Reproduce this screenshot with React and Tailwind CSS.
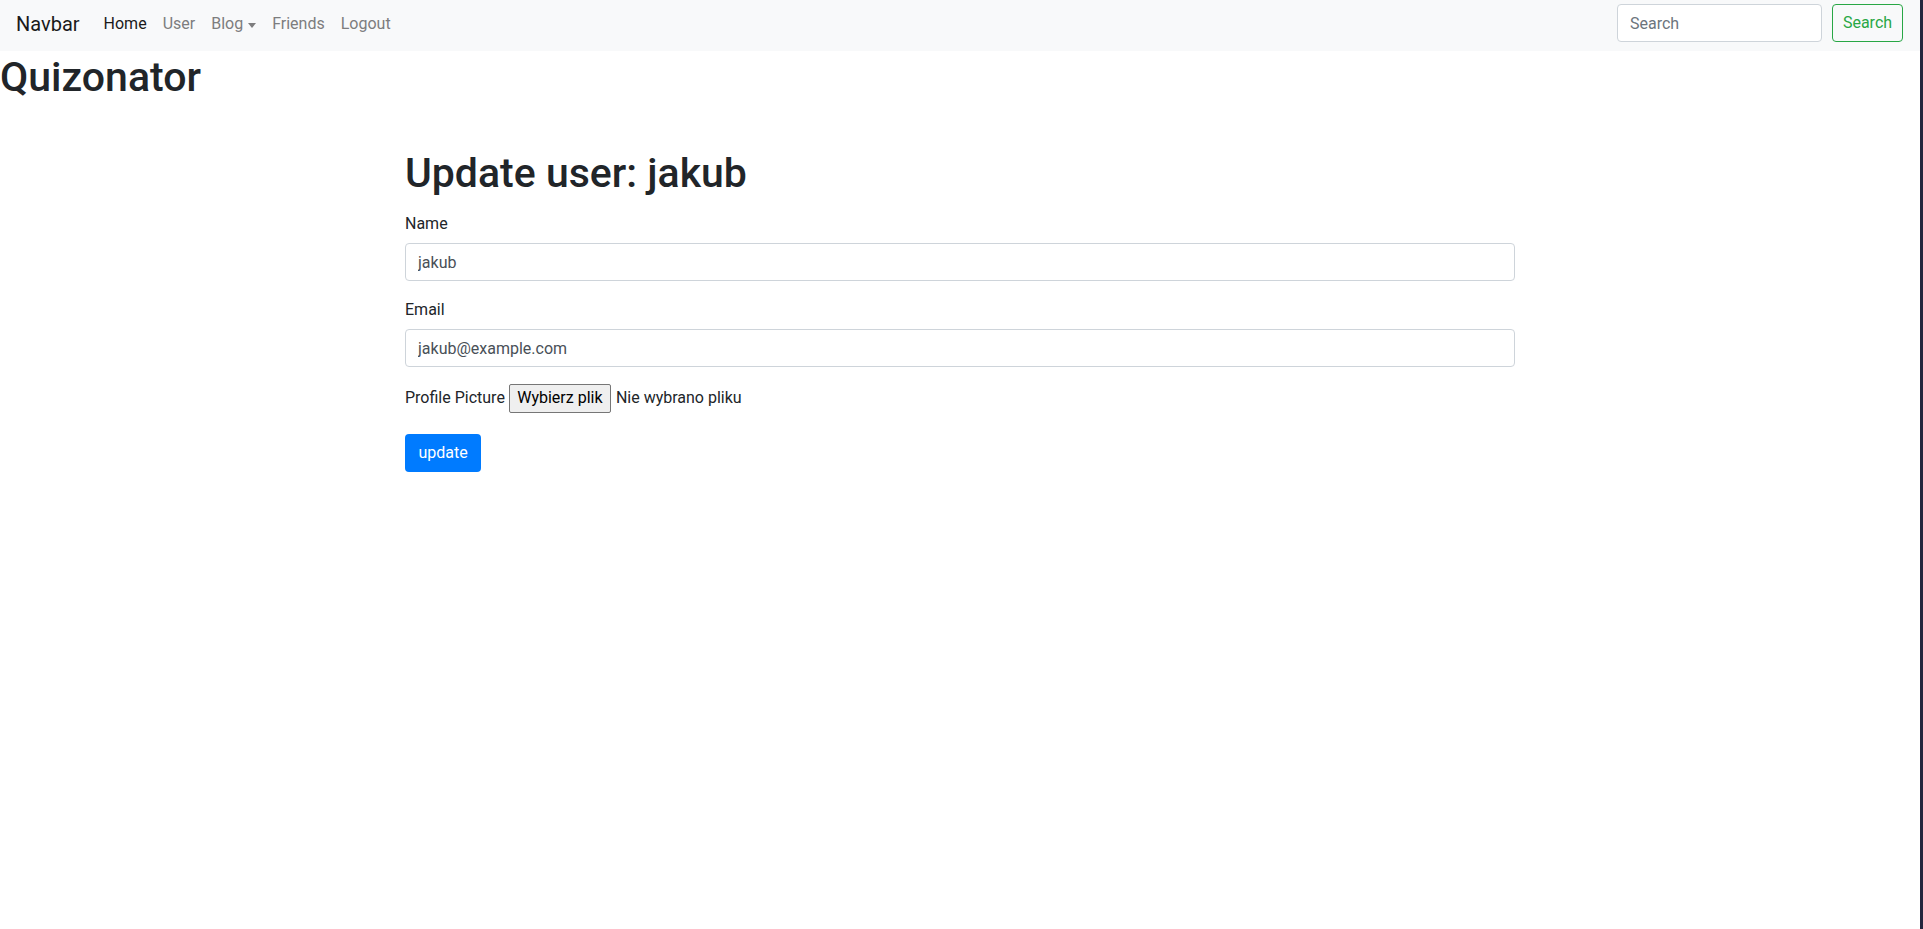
export default function App() {
  return (
    <div className="flex w-[1923px] min-h-[929px] bg-white" style={{ fontFamily: 'Roboto, "Liberation Sans", sans-serif' }}>
      <div className="w-[1920px] text-[#212529]">
        {/* Navbar */}
        <nav className="h-[51px] bg-[#f8f9fa] pt-1">
          <div className="flex h-[38px] items-center pl-4 pr-[17px]">
            <a className="mr-4 mt-[2px] text-[20px] leading-[30px] text-[#1a1a1a]">Navbar</a>
            <ul className="mt-[2px] flex items-center text-[16px] leading-6">
              <li className="px-2 text-[#1a1a1a]">Home</li>
              <li className="px-2 text-[#7d7d7e]">User</li>
              <li className="flex items-center px-2 text-[#7d7d7e]">
                Blog
                <span className="ml-[5px] mt-[2px] h-0 w-0 border-x-[4.5px] border-t-[5px] border-x-transparent border-t-[#7d7d7e]" />
              </li>
              <li className="px-2 text-[#7d7d7e]">Friends</li>
              <li className="px-2 text-[#7d7d7e]">Logout</li>
            </ul>
            <div className="ml-auto flex items-center">
              <input
                type="text"
                placeholder="Search"
                className="h-[38px] w-[205px] rounded border border-[#ced4da] bg-white px-3 text-[16px] text-[#495057] outline-none placeholder:text-[#6c757d]"
              />
              <button className="ml-[10px] h-[38px] w-[71px] rounded border border-[#28a745] text-[16px] text-[#28a745]">
                Search
              </button>
            </div>
          </div>
        </nav>

        {/* Brand heading */}
        <h1 className="mt-[4px] text-[41px] font-medium leading-[44px]">Quizonator</h1>

        {/* Form container */}
        <div className="mx-auto w-[1110px] pt-[52px]">
          <h1 className="text-[41px] font-medium leading-[44px]">Update user: jakub</h1>
          <form className="mt-[16px]">
            <div className="mb-4">
              <label className="mb-[7px] block pt-[1px] text-[16px] leading-6">Name</label>
              <input
                type="text"
                defaultValue="jakub"
                className="block h-[38px] w-full rounded border border-[#ced4da] px-3 text-[16px] text-[#495057] outline-none"
              />
            </div>
            <div className="mb-4">
              <label className="mb-[7px] block pt-[1px] text-[16px] leading-6">Email</label>
              <input
                type="email"
                defaultValue="jakub@example.com"
                className="block h-[38px] w-full rounded border border-[#ced4da] px-3 text-[16px] text-[#495057] outline-none"
              />
            </div>
            <div className="mb-[21px] mt-[1px] flex h-[30px] items-center text-[16px] leading-6">
              <span>Profile Picture</span>
              <span className="ml-[4px] flex h-[29px] w-[102px] items-center justify-center rounded-[2px] border border-[#767676] bg-[#efefef] text-black">
                Wybierz plik
              </span>
              <span className="ml-[5px]">Nie wybrano pliku</span>
            </div>
            <button
              type="button"
              className="h-[38px] w-[76px] rounded bg-[#007bff] text-[16px] text-white"
            >
              update
            </button>
          </form>
        </div>
      </div>
      <div className="w-[3px] bg-[#23253d]" />
    </div>
  );
}
